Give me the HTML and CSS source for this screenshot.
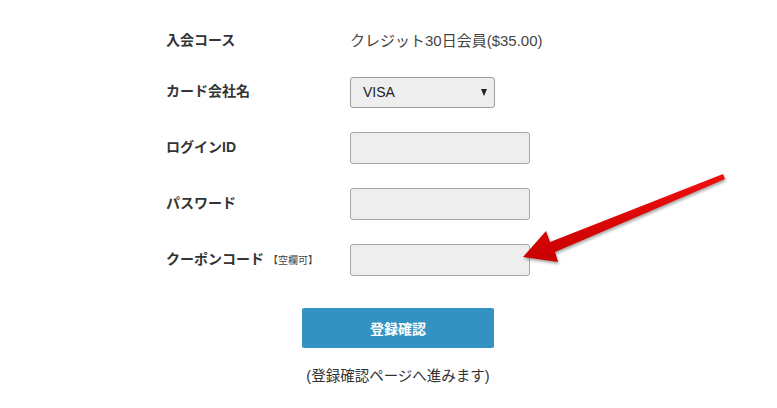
FILE: index.html
```html
<!DOCTYPE html>
<html lang="ja">
<head>
    <meta charset="UTF-8">
    <meta name="viewport" content="width=device-width, initial-scale=1.0">
    <title>入会フォーム</title>
    <link rel="stylesheet" href="styles.css">
</head>
<body>
    <div class="page">
        <form action="#" method="post" class="regForm">
            <div class="row first">
                <label class="label">入会コース</label>
                <span class="value">クレジット30日会員($35.00)</span>
            </div>
            <div class="row">
                <label class="label" for="card">カード会社名</label>
                <div class="selectWrap">
                    <select id="card" name="card" class="select">
                        <option>VISA</option>
                        <option>MasterCard</option>
                        <option>JCB</option>
                    </select>
                </div>
            </div>
            <div class="row">
                <label class="label" for="loginId">ログインID</label>
                <input type="text" id="loginId" name="loginId" class="field">
            </div>
            <div class="row">
                <label class="label" for="password">パスワード</label>
                <input type="password" id="password" name="password" class="field">
            </div>
            <div class="row">
                <label class="label" for="coupon">クーポンコード <small class="note">【空欄可】</small></label>
                <input type="text" id="coupon" name="coupon" class="field">
            </div>
            <div class="actions">
                <button type="submit" class="submitBtn">登録確認</button>
                <p class="hint">(登録確認ページへ進みます)</p>
            </div>
        </form>

        <svg class="arrow" width="777" height="408" viewBox="0 0 777 408">
            <defs>
                <linearGradient id="arrowFill" x1="0" y1="0" x2="0" y2="1">
                    <stop offset="0" stop-color="#f01010"/>
                    <stop offset="1" stop-color="#c80000"/>
                </linearGradient>
            </defs>
            <polygon class="arrowShape" fill="url(#arrowFill)"
                points="523,257 546,231 550,242 723,174 725,179 555,252 558,262"/>
        </svg>
    </div>
</body>
</html>
```

FILE: styles.css
```css
body {
    margin: 0;
    font-family: "Liberation Sans", Arial, "Noto Sans CJK JP", sans-serif;
    font-size: 14px;
    color: #333;
    background-color: #fff;
}

.page {
    position: relative;
    width: 777px;
    height: 408px;
    overflow: hidden;
}

.regForm {
    width: 464px;
    padding: 18px 0 0 166px;
}

.row {
    display: grid;
    grid-template-columns: 184px 1fr;
    align-items: center;
    height: 56px;
}

.row.first {
    height: 46px;
}

.label {
    padding-bottom: 4px;
    font-weight: bold;
    color: #333;
}

.note {
    font-size: 10px;
    font-weight: normal;
    color: #444;
}

.value {
    padding-bottom: 4px;
    font-size: 15px;
    color: #444;
}

.selectWrap {
    position: relative;
    width: 145px;
}

.selectWrap::after {
    content: "";
    position: absolute;
    right: 8px;
    top: 12px;
    border-left: 3.5px solid transparent;
    border-right: 3.5px solid transparent;
    border-top: 7px solid #222;
}

.select {
    appearance: none;
    -webkit-appearance: none;
    width: 145px;
    height: 31px;
    padding: 0 12px;
    border: 1px solid #9e9e9e;
    border-radius: 3px;
    background-color: #eee;
    font-family: inherit;
    font-size: 14px;
    color: #222;
}

.field {
    width: 180px;
    height: 32px;
    box-sizing: border-box;
    border: 1px solid #a5a5a5;
    border-radius: 3px;
    background-color: #eee;
}

.actions {
    display: flex;
    flex-direction: column;
    align-items: center;
    width: 464px;
    margin-top: 20px;
}

.submitBtn {
    width: 192px;
    height: 40px;
    border: none;
    border-radius: 2px;
    background-color: #3392c2;
    color: #fff;
    font-family: inherit;
    font-size: 14px;
    font-weight: bold;
    cursor: pointer;
}

.hint {
    margin: 18px 0 0;
    line-height: 20px;
    font-size: 14.5px;
    color: #333;
}

.arrow {
    position: absolute;
    left: 0;
    top: 0;
    pointer-events: none;
}

.arrowShape {
    filter: drop-shadow(1px 2px 1.5px rgba(0, 0, 0, 0.35));
}
```
